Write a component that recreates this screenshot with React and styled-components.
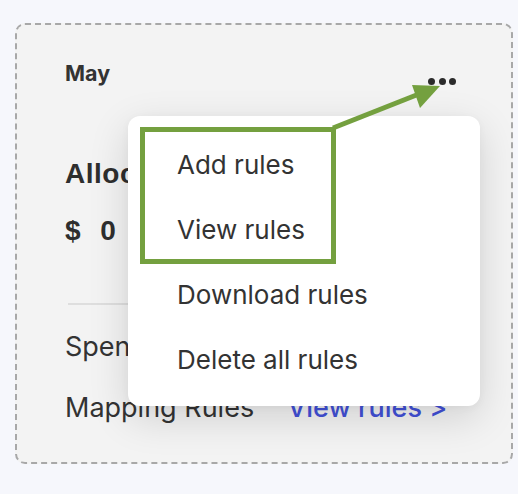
import React from 'react'
import styled, {createGlobalStyle} from 'styled-components'

const GlobalStyle = createGlobalStyle`
  html, body {
    margin: 0;
    background: #f6f7fc;
  }
  body {
    font-family: Inter, "Noto Sans", sans-serif;
    color: #333;
  }
`

const Page = styled.div`
  padding: 23px 5px 30px 15px;
`

const Card = styled.div`
  position: relative;
  box-sizing: border-box;
  width: 498px;
  height: 441px;
  background: #f3f3f3;
  border: 2px dashed #a8a8a8;
  border-radius: 10px;
  padding: 36px 55px 0 48px;
`

const Header = styled.div`
  display: flex;
  align-items: flex-start;
  justify-content: space-between;
  height: 24px;
`

const Month = styled.div`
  font-size: 21.5px;
  font-weight: 700;
  line-height: 24px;
`

const Dots = styled.div`
  display: flex;
  gap: 3.5px;
  margin-top: 17px;
  span {
    width: 7px;
    height: 7px;
    border-radius: 50%;
    background: #2b2b2b;
  }
`

const Title = styled.div`
  margin-top: 73px;
  font-family: "Liberation Sans", Arial, sans-serif;
  font-size: 28px;
  font-weight: 700;
  letter-spacing: 0.5px;
  line-height: 32px;
  color: #2e2e2e;
`

const Amount = styled(Title)`
  margin-top: 25px;
  word-spacing: 11px;
`

const Divider = styled.hr`
  margin: 56px 0 0 3px;
  border: 0;
  border-top: 2px solid #dedede;
`

const Row = styled.div`
  display: flex;
  align-items: baseline;
  gap: 33px;
  margin-top: ${p => p.gap}px;
  font-size: 27px;
  line-height: 32px;
`

const Link = styled.span`
  color: #4251d8;
  font-weight: 500;
`

const Menu = styled.div`
  position: absolute;
  left: 111px;
  top: 91px;
  width: 352px;
  box-sizing: border-box;
  padding: 15px 0;
  background: #fff;
  border-radius: 12px;
  box-shadow: 0 12px 40px rgba(0, 0, 0, 0.14), 0 2px 8px rgba(0, 0, 0, 0.04);
`

const MenuItem = styled.div`
  height: 65px;
  display: flex;
  align-items: center;
  padding-left: 49px;
  padding-top: 2px;
  box-sizing: border-box;
  font-size: 26px;
  color: #333;
`

const Highlight = styled.div`
  position: absolute;
  left: 123px;
  top: 102px;
  width: 196px;
  height: 137px;
  box-sizing: border-box;
  border: 5px solid #74a03f;
  pointer-events: none;
`

const Arrow = styled.svg`
  position: absolute;
  left: 0;
  top: 0;
  pointer-events: none;
`

export default function App () {
  return (
    <Page>
      <GlobalStyle />
      <Card>
        <Header>
          <Month>May</Month>
          <Dots><span /><span /><span /></Dots>
        </Header>
        <Title>Allocation</Title>
        <Amount>$ 0</Amount>
        <Divider />
        <Row gap={26}>Spent</Row>
        <Row gap={29}>Mapping Rules <Link>View rules &gt;</Link></Row>
        <Menu>
          <MenuItem>Add rules</MenuItem>
          <MenuItem>View rules</MenuItem>
          <MenuItem>Download rules</MenuItem>
          <MenuItem>Delete all rules</MenuItem>
        </Menu>
        <Highlight />
        <Arrow width='494' height='437' viewBox='0 0 494 437'>
          <line x1='316' y1='103' x2='402' y2='69' stroke='#74a03f' strokeWidth='5' />
          <polygon points='395,60 423,61 403,83' fill='#74a03f' />
        </Arrow>
      </Card>
    </Page>
  )
}
